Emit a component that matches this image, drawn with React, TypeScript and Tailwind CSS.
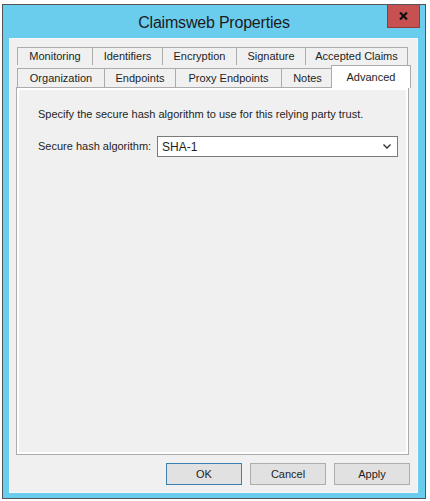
import React from 'react';

const row1 = [
  { label: 'Monitoring', w: 75 },
  { label: 'Identifiers', w: 70 },
  { label: 'Encryption', w: 74 },
  { label: 'Signature', w: 69 },
  { label: 'Accepted Claims', w: 103 },
];

const row2 = [
  { label: 'Organization', w: 87 },
  { label: 'Endpoints', w: 71 },
  { label: 'Proxy Endpoints', w: 106 },
  { label: 'Notes', w: 52 },
];

const Tab: React.FC<{ label: string; w: number; last?: boolean; h: number }> = ({ label, w, last, h }) => (
  <div
    className={`flex items-center justify-center bg-[#f0f0f0] border-t border-l border-[#acacac] text-[11px] text-[#1e1e1e] ${last ? 'border-r' : ''}`}
    style={{ width: w, height: h }}
  >
    {label}
  </div>
);

const Button: React.FC<{ label: string; primary?: boolean }> = ({ label, primary }) => (
  <button
    className={`w-[76px] h-[22px] bg-[#e1e1e1] border text-[11px] text-[#1e1e1e] flex items-center justify-center ${
      primary ? 'border-[#3c7fb1]' : 'border-[#adadad]'
    }`}
  >
    {label}
  </button>
);

export default function App() {
  return (
    <div className="w-[430px] h-[501px] bg-white pl-[2px] pt-[4px] font-['Liberation_Sans',sans-serif]">
      <div className="w-[424px] h-[495px] border border-[#555555] bg-[#6bcdee] flex flex-col">
        <div className="h-[33px] relative flex items-center justify-center">
          <span className="text-[16px] text-[#1b1b1b] tracking-[-0.2px] pt-[2px]">Claimsweb Properties</span>
          <div className="absolute right-[5px] top-0 w-[33px] h-[23px] bg-[#c75050] border border-t-0 border-[#933a3a] flex items-center justify-center">
            <svg width="9" height="8" viewBox="0 0 9 8">
              <path d="M1 0.5 L8 7.5 M8 0.5 L1 7.5" stroke="#111" strokeWidth="2.2" />
            </svg>
          </div>
        </div>
        <div className="flex-1 ml-[6px] mr-[7px] mb-[5px] bg-[#f0f0f0] border border-[#f8f8f8] flex flex-col pt-[8px]">
          <div className="ml-[7px] flex">
            {row1.map((t, i) => (
              <Tab key={t.label} label={t.label} w={t.w} h={18} last={i === row1.length - 1} />
            ))}
          </div>
          <div className="ml-[7px] flex items-end">
            {row2.map((t) => (
              <Tab key={t.label} label={t.label} w={t.w} h={19} />
            ))}
            <div className="w-[80px] h-[23px] -ml-[2px] -mb-[1px] relative z-10 bg-white border-t border-l border-r border-[#acacac] flex items-start justify-center pt-[3px] text-[11px] text-[#1e1e1e]">
              Advanced
            </div>
          </div>
          <div className="ml-[6px] w-[393px] h-[368px] border border-[#acacac] bg-white p-[2px]">
            <div className="h-full bg-[#f0f0f0] pl-[19px] pt-[17px] text-[11px] text-[#1e1e1e]">
              <div className="leading-[14px]">Specify the secure hash algorithm to use for this relying party trust.</div>
              <div className="flex items-center mt-[15px]">
                <span className="w-[119px]">Secure hash algorithm:</span>
                <div className="w-[241px] h-[21px] bg-white border border-[#7a7a7a] flex items-center justify-between pl-[4px] pr-[6px]">
                  <span className="text-[12px]">SHA-1</span>
                  <svg width="8" height="5" viewBox="0 0 8 5">
                    <path d="M0.5 0.5 L4 4 L7.5 0.5" stroke="#333" strokeWidth="1.4" fill="none" />
                  </svg>
                </div>
              </div>
            </div>
          </div>
          <div className="flex justify-end gap-[8px] mt-[8px] mr-[7px]">
            <Button label="OK" primary />
            <Button label="Cancel" />
            <Button label="Apply" />
          </div>
        </div>
      </div>
    </div>
  );
}
